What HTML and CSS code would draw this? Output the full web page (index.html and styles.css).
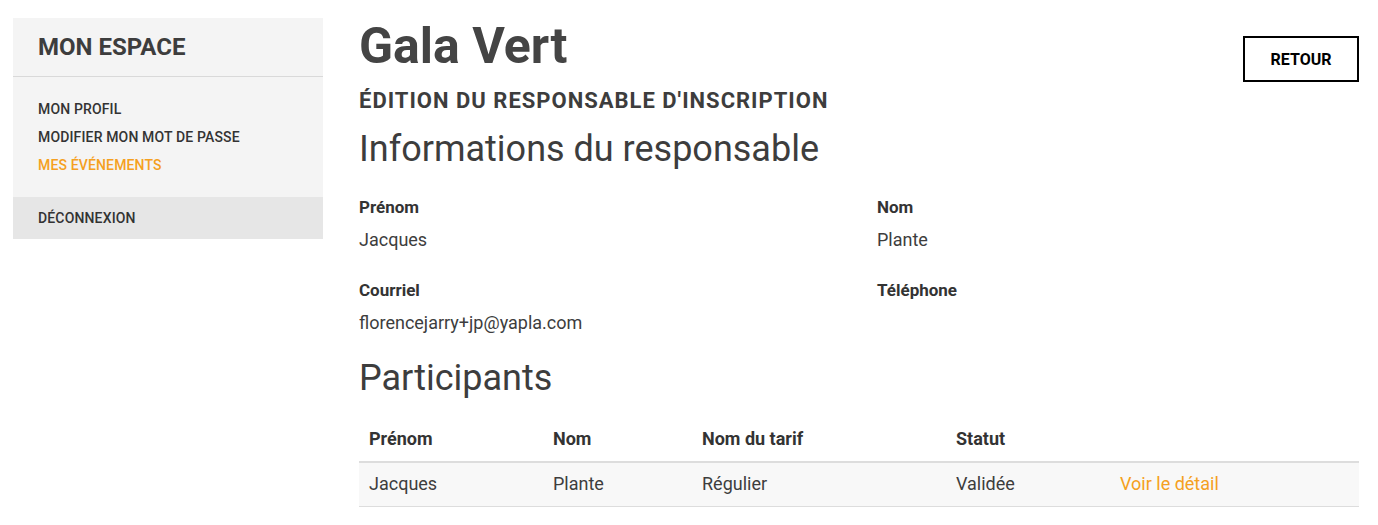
FILE: index.html
```html
<!DOCTYPE html>
<html lang="fr">

<head>
    <meta charset="UTF-8">
    <meta name="viewport" content="width=device-width, initial-scale=1.0">
    <title>Gala Vert - Édition du responsable</title>
    <link rel="stylesheet" href="styles.css">
</head>

<body>
    <div class="page">
        <aside class="side">
            <div class="side-head">MON ESPACE</div>
            <nav class="side-nav">
                <a href="#">MON PROFIL</a>
                <a href="#">MODIFIER MON MOT DE PASSE</a>
                <a href="#" class="actif">MES ÉVÉNEMENTS</a>
            </nav>
            <a href="#" class="deco">DÉCONNEXION</a>
        </aside>

        <main class="contenu">
            <div class="entete">
                <div>
                    <h1>Gala Vert</h1>
                    <h4>ÉDITION DU RESPONSABLE D'INSCRIPTION</h4>
                </div>
                <a href="#" class="retour">RETOUR</a>
            </div>

            <h2>Informations du responsable</h2>
            <div class="infos">
                <div class="champ">
                    <label>Prénom</label>
                    <p>Jacques</p>
                </div>
                <div class="champ">
                    <label>Nom</label>
                    <p>Plante</p>
                </div>
                <div class="champ">
                    <label>Courriel</label>
                    <p>florencejarry+jp@yapla.com</p>
                </div>
                <div class="champ">
                    <label>Téléphone</label>
                    <p></p>
                </div>
            </div>

            <h2 class="h-part">Participants</h2>
            <table class="tab">
                <thead>
                    <tr>
                        <th class="c1">Prénom</th>
                        <th class="c2">Nom</th>
                        <th class="c3">Nom du tarif</th>
                        <th class="c4">Statut</th>
                        <th></th>
                    </tr>
                </thead>
                <tbody>
                    <tr>
                        <td>Jacques</td>
                        <td>Plante</td>
                        <td>Régulier</td>
                        <td>Validée</td>
                        <td><a href="#">Voir le détail</a></td>
                    </tr>
                </tbody>
            </table>
        </main>
    </div>
</body>

</html>
```

FILE: styles.css
```css
body {
    margin: 0;
    font-family: Roboto, "Liberation Sans", sans-serif;
    color: #3d3d3d;
    background: #fff;
}

a {
    text-decoration: none;
}

.page {
    display: flex;
    gap: 36px;
    padding: 18px 19px 0 13px;
}

/* menu de gauche */
.side {
    width: 310px;
    flex-shrink: 0;
    background: #f4f4f4;
    align-self: flex-start;
}

.side-head {
    font-size: 24px;
    font-weight: 700;
    padding: 15px 25px 15px;
    border-bottom: 1px solid #d9d9d9;
    line-height: 28px;
}

.side-nav {
    display: flex;
    flex-direction: column;
    padding: 18px 25px 18px;
}

.side-nav a,
.deco {
    font-size: 14px;
    font-weight: 500;
    letter-spacing: 0.15px;
    color: #333;
    line-height: 28px;
}

.side-nav a.actif {
    color: #f5a021;
}

.deco {
    display: block;
    background: #e6e6e6;
    padding: 7px 25px;
}

/* contenu */
.contenu {
    flex: 1;
}

.entete {
    display: flex;
    justify-content: space-between;
    align-items: flex-start;
}

h1 {
    margin: 0;
    font-size: 50px;
    line-height: 56px;
    font-weight: 700;
    color: #444;
}

h4 {
    margin: 14px 0 0;
    font-size: 22px;
    letter-spacing: 1px;
    line-height: 26px;
    font-weight: 700;
}

.retour {
    margin-top: 18px;
    border: 2px solid #000;
    color: #000;
    font-weight: 700;
    font-size: 16px;
    padding: 13px 0 11px;
    line-height: 18px;
    width: 116px;
    box-sizing: border-box;
    text-align: center;
}

h2 {
    margin: 13px 0 0;
    font-size: 36px;
    font-weight: 400;
    line-height: 44px;
}

.infos {
    display: grid;
    grid-template-columns: 1fr 1fr;
    column-gap: 36px;
    row-gap: 29px;
    margin-top: 26px;
}

.champ label {
    display: block;
    font-size: 17px;
    font-weight: 700;
    line-height: 20px;
    color: #333;
}

.champ p {
    margin: 12px 0 0;
    font-size: 18px;
    line-height: 22px;
    min-height: 22px;
}

.h-part {
    margin-top: 22px;
}

.tab {
    width: 100%;
    border-collapse: collapse;
    margin-top: 18px;
    font-size: 18px;
}

.tab th {
    text-align: left;
    font-weight: 700;
    color: #333;
    padding: 10px 10px 12px;
    border-bottom: 2px solid #ddd;
}

.tab td {
    padding: 10px 10px 11px;
    background: #f8f8f8;
    border-bottom: 1px solid #ddd;
    line-height: 22px;
}

.tab td a {
    color: #f5a021;
}

.c1 { width: 164px; }
.c2 { width: 129px; }
.c3 { width: 234px; }
.c4 { width: 144px; }
```
